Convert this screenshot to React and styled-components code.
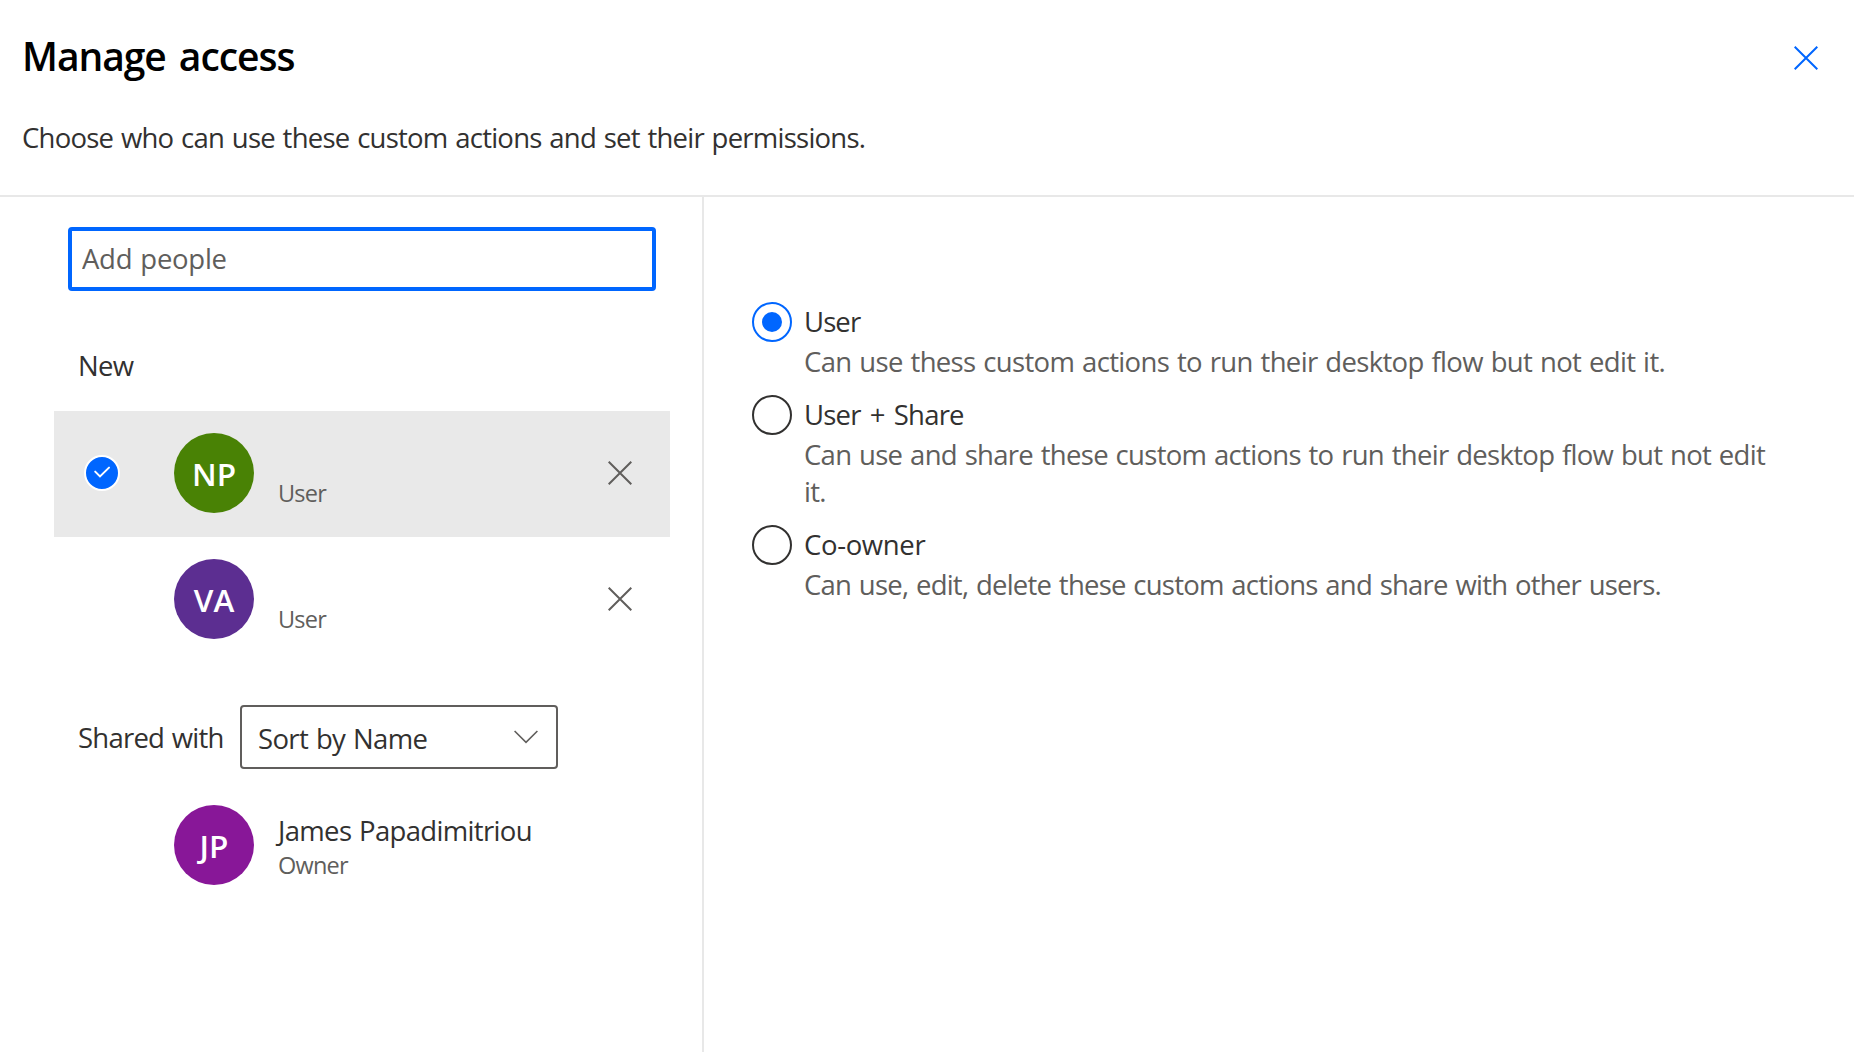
import React, { useState } from "react";
import styled, { createGlobalStyle } from "styled-components";

const GlobalStyle = createGlobalStyle`
  * { box-sizing: border-box; }
  body {
    margin: 0;
    background: #fff;
    color: #323130;
    font-family: "Open Sans", "Noto Sans", sans-serif;
    font-size: 27.5px;
  }
  button, input {
    font: inherit;
    letter-spacing: inherit;
    word-spacing: inherit;
    color: inherit;
    margin: 0;
  }
`;

const Dialog = styled.main`
  display: flex;
  flex-direction: column;
  width: 1854px;
  height: 1052px;
  overflow: hidden;
  word-spacing: 1.3px;
`;

const Header = styled.header`
  display: flex;
  justify-content: space-between;
  height: 197px;
  padding: 31px 36px 0 22px;
  border-bottom: 2px solid #e8e8e8;
`;

const Title = styled.h1`
  margin: 0;
  font-size: 39px;
  line-height: 50px;
  font-weight: 600;
  letter-spacing: -1.05px;
  word-spacing: 4px;
  color: #000;
`;

const Intro = styled.p`
  margin: 37px 0 0;
  line-height: 40px;
  letter-spacing: -0.76px;
`;

const IconButton = styled.button`
  display: grid;
  place-items: center;
  width: 24px;
  height: 24px;
  padding: 0;
  border: 0;
  background: none;
  color: ${(p) => p.$color};
  margin-top: ${(p) => p.$top || 0}px;
`;

const Body = styled.div`
  display: flex;
  flex: 1;
`;

const People = styled.section`
  width: 704px;
  padding: 30px 32px 0 54px;
  border-right: 2px solid #e8e8e8;
`;

const AddInput = styled.input`
  display: block;
  width: 588px;
  height: 64px;
  margin-left: 14px;
  padding: 0 10px 1px;
  border: 4px solid #0066ff;
  border-radius: 4px;
  outline: none;
  letter-spacing: -0.28px;
  &::placeholder { color: #605e5c; opacity: 1; }
`;

const GroupTitle = styled.h2`
  margin: 55px 0 25px 24px;
  font-size: inherit;
  font-weight: 400;
  line-height: 40px;
  letter-spacing: -0.7px;
`;

const PersonRow = styled.div`
  display: flex;
  align-items: center;
  width: 616px;
  height: 126px;
  padding: 0 38px 2px 30px;
  background: ${(p) => (p.$selected ? "#e9e9e9" : "transparent")};
`;

const CheckSlot = styled.div`
  width: 90px;
  height: 36px;
`;

const Check = styled.div`
  display: grid;
  place-items: center;
  width: 36px;
  height: 36px;
  border: 2px solid #fff;
  border-radius: 50%;
  background: #0066ff;
`;

const Avatar = styled.div`
  width: 80px;
  height: 80px;
  padding-top: 1px;
  border-radius: 50%;
  background: ${(p) => p.$color};
  color: #fff;
  font-size: 31.5px;
  font-weight: 650;
  line-height: 80px;
  text-align: center;
`;

const Details = styled.div`
  display: flex;
  flex: 1;
  flex-direction: column;
  justify-content: flex-end;
  height: 80px;
  padding: 0 0 4px 24px;
`;

const Name = styled.div`
  line-height: 36px;
  letter-spacing: -0.67px;
`;

const Role = styled.div`
  font-size: 23.5px;
  line-height: 32px;
  letter-spacing: -0.8px;
  color: #605e5c;
`;

const SharedBar = styled.div`
  display: flex;
  align-items: center;
  margin: 42px 0 14px;
  padding-left: 24px;
`;

const SharedLabel = styled.span`
  width: 162px;
  letter-spacing: -0.77px;
`;

const SortSelect = styled.button`
  display: flex;
  align-items: center;
  justify-content: space-between;
  width: 318px;
  height: 64px;
  padding: 0 18px 0 16px;
  border: 2px solid #605e5c;
  border-radius: 4px;
  background: #fff;
  letter-spacing: -0.64px;
`;

const SortValue = styled.span`
  padding-top: 2px;
`;

const Permissions = styled.section`
  flex: 1;
  padding: 105px 70px 0 48px;
`;

const Option = styled.label`
  display: grid;
  grid-template-columns: 40px 1fr;
  column-gap: 12px;
  margin-bottom: 15px;
`;

const Radio = styled.span`
  display: grid;
  place-items: center;
  width: 40px;
  height: 40px;
  border: 2px solid ${(p) => (p.$on ? "#0066ff" : "#323130")};
  border-radius: 50%;
  &::after {
    content: "";
    width: 20px;
    height: 20px;
    border-radius: 50%;
    background: ${(p) => (p.$on ? "#0066ff" : "transparent")};
  }
`;

const OptionName = styled.span`
  line-height: 40px;
  letter-spacing: ${(p) => p.$tracking}px;
  word-spacing: 2.8px;
`;

const OptionText = styled.span`
  grid-column: 2;
  line-height: 37px;
  padding-top: 1px;
  color: #605e5c;
  letter-spacing: ${(p) => p.$tracking}px;
`;

const Cross = () => (
  <svg width="24" height="24" viewBox="0 0 24 24" fill="none" stroke="currentColor" strokeWidth="2">
    <path d="M.7.7 23.3 23.3M23.3.7.7 23.3" />
  </svg>
);

const Tick = () => (
  <svg width="32" height="32" viewBox="0 0 32 32" fill="none" stroke="#fff" strokeWidth="2" strokeLinecap="round">
    <path d="M9.2 14.6 14 19.4 23 10.6" />
  </svg>
);

const Chevron = () => (
  <svg width="24" height="14" viewBox="0 0 24 14" fill="none" stroke="#605e5c" strokeWidth="1.6">
    <path d="M.6 1 12 12.4 23.4 1" />
  </svg>
);

function Person({ initials, color, name, role, selected, removable }) {
  return (
    <PersonRow $selected={selected}>
      <CheckSlot>{selected && <Check><Tick /></Check>}</CheckSlot>
      <Avatar $color={color}>{initials}</Avatar>
      <Details>
        {name && <Name>{name}</Name>}
        <Role>{role}</Role>
      </Details>
      {removable && <IconButton $color="#605e5c" aria-label="Remove"><Cross /></IconButton>}
    </PersonRow>
  );
}

const OPTIONS = [
  {
    name: "User",
    nameTracking: -0.9,
    text: "Can use thess custom actions to run their desktop flow but not edit it.",
    textTracking: -0.66,
  },
  {
    name: "User + Share",
    nameTracking: -0.8,
    text: "Can use and share these custom actions to run their desktop flow but not edit it.",
    textTracking: -0.71,
  },
  {
    name: "Co-owner",
    nameTracking: -0.35,
    text: "Can use, edit, delete these custom actions and share with other users.",
    textTracking: -0.77,
  },
];

export default function App() {
  const [level, setLevel] = useState("User");
  return (
    <>
      <GlobalStyle />
      <Dialog>
        <Header>
          <div>
            <Title>Manage access</Title>
            <Intro>Choose who can use these custom actions and set their permissions.</Intro>
          </div>
          <IconButton $color="#0066ff" $top={15} aria-label="Close"><Cross /></IconButton>
        </Header>
        <Body>
          <People>
            <AddInput placeholder="Add people" />
            <GroupTitle>New</GroupTitle>
            <Person initials="NP" color="#498205" role="User" selected removable />
            <Person initials="VA" color="#5c2e91" role="User" removable />
            <SharedBar>
              <SharedLabel>Shared with</SharedLabel>
              <SortSelect><SortValue>Sort by Name</SortValue><Chevron /></SortSelect>
            </SharedBar>
            <Person initials="JP" color="#881798" name="James Papadimitriou" role="Owner" />
          </People>
          <Permissions>
            {OPTIONS.map(({ name, nameTracking, text, textTracking }) => (
              <Option key={name} onClick={() => setLevel(name)}>
                <Radio $on={level === name} />
                <OptionName $tracking={nameTracking}>{name}</OptionName>
                <OptionText $tracking={textTracking}>{text}</OptionText>
              </Option>
            ))}
          </Permissions>
        </Body>
      </Dialog>
    </>
  );
}
